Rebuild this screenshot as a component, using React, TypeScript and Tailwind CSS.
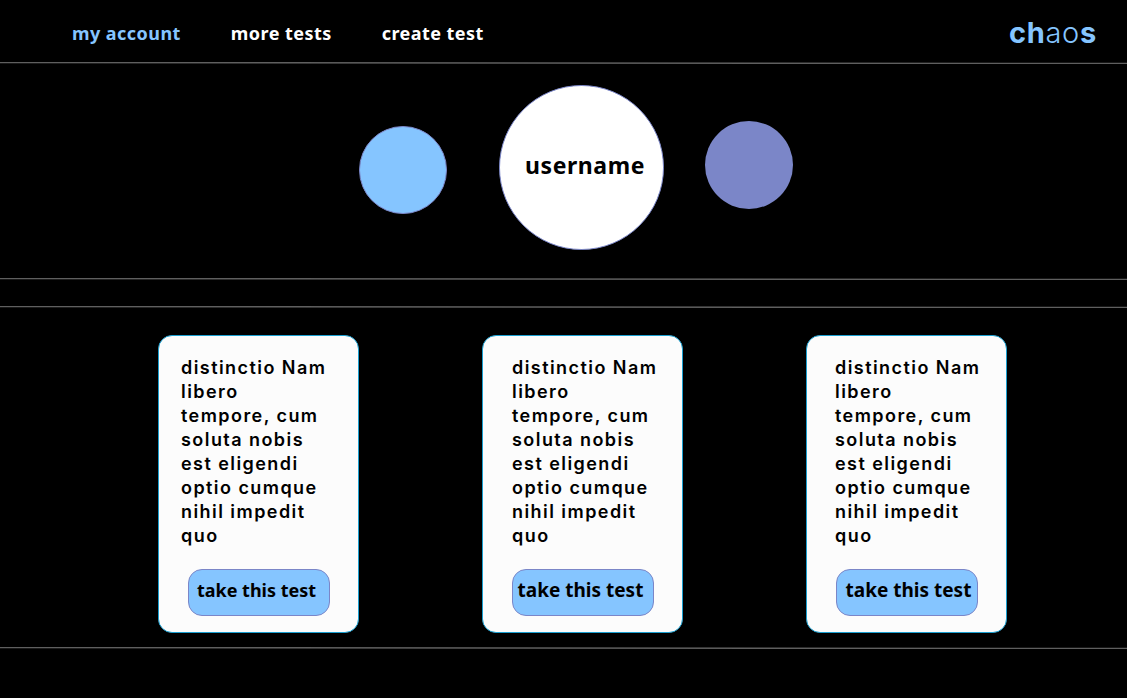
const navItems = [
  { label: 'my account', active: true },
  { label: 'more tests', active: false },
  { label: 'create test', active: false },
];

const cards = [
  { id: 'first', textInset: 'pl-[22px]', button: 'text-[18px] pr-1' },
  { id: 'second', textInset: 'pl-[29px]', button: 'text-[19px] pr-1' },
  { id: 'third', textInset: 'pl-[28px]', button: 'text-[19px] pl-1' },
];

const excerpt = 'distinctio Nam libero tempore, cum soluta nobis est eligendi optio cumque nihil impedit quo';

function Divider() {
  return (
    <svg className="block h-[2px] w-full" aria-hidden="true">
      <line x1="0" y1="0.5" x2="100%" y2="1.5" stroke="#5f5f5f" strokeWidth="1.5" />
    </svg>
  );
}

function TestCard({ textInset, button }: { textInset: string; button: string }) {
  return (
    <article className="w-[201px] rounded-[14px] border border-[#1a9fd0] bg-[#fcfcfc] pt-5 pb-4">
      <p className={`${textInset} pr-[22px] font-['Inter',sans-serif] text-[18px] leading-6 font-semibold tracking-[0.08em]`}>
        <span className="block w-[148px]">{excerpt}</span>
      </p>
      <button
        type="button"
        className={`mx-auto mt-[21px] flex h-[47px] w-[142px] items-center justify-center rounded-[14px] border border-[#7b86c8] bg-[#85c5ff] pb-1 font-bold whitespace-nowrap ${button}`}
      >
        take this test
      </button>
    </article>
  );
}

export default function App() {
  return (
    <div className="min-h-screen bg-black font-['Noto_Sans',sans-serif] text-black">
      <header className="flex h-[62px] items-center justify-between pt-1 pr-[30px] pl-[72px]">
        <nav className="flex gap-[50px] text-[18px] font-bold tracking-wide">
          {navItems.map((item) => (
            <a key={item.label} href="#" className={item.active ? 'text-[#85c5ff]' : 'text-white'}>
              {item.label}
            </a>
          ))}
        </nav>
        <a href="#" className="font-['Inter',sans-serif] text-[29px] font-bold tracking-wide text-[#85c5ff]">
          ch<span className="font-light">ao</span>s
        </a>
      </header>
      <Divider />
      <main>
        <section className="flex items-center justify-center pt-[21px] pb-7 pl-6">
          <div className="mt-1 mr-[52px] size-[88px] rounded-full border border-[#7b86c8] bg-[#85c5ff]" />
          <div className="flex size-[165px] items-center justify-center rounded-full border border-[#7b86c8] bg-white pb-1 pl-2">
            <h1 className="text-[23px] font-bold tracking-wide">username</h1>
          </div>
          <div className="mb-1.5 ml-[41px] size-[88px] rounded-full bg-[#7b86c8]" />
        </section>
        <Divider />
        <div className="h-[26px]" />
        <Divider />
        <section className="flex flex-wrap justify-center gap-x-[123px] gap-y-6 pt-[27px] pb-[14px] pl-[38px]">
          {cards.map((card) => (
            <TestCard key={card.id} textInset={card.textInset} button={card.button} />
          ))}
        </section>
        <Divider />
      </main>
    </div>
  );
}
